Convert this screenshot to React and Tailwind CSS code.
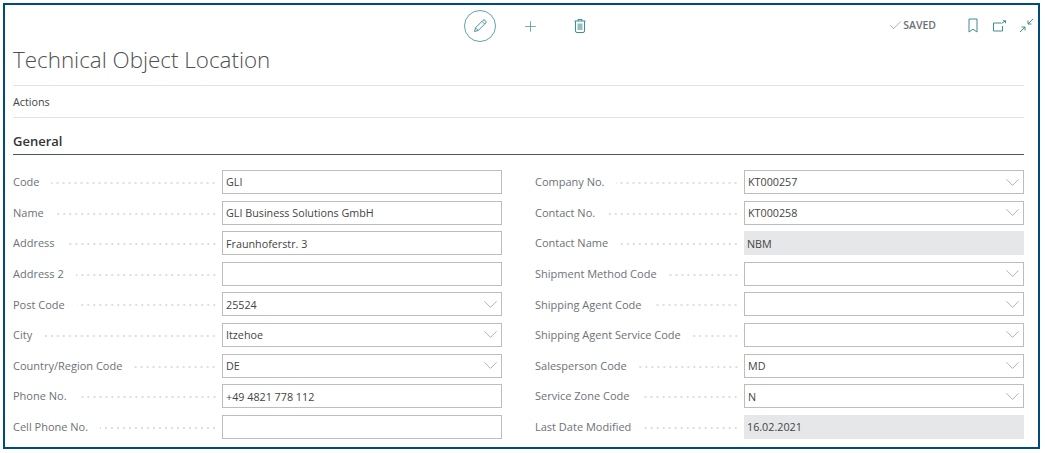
import { Check, ChevronDown, Plus } from 'lucide-react'

const leftFields = [
  { label: 'Code', value: 'GLI' },
  { label: 'Name', value: 'GLI Business Solutions GmbH' },
  { label: 'Address', value: 'Fraunhoferstr. 3' },
  { label: 'Address 2', value: '' },
  { label: 'Post Code', value: '25524', select: true },
  { label: 'City', value: 'Itzehoe', select: true },
  { label: 'Country/Region Code', value: 'DE', select: true },
  { label: 'Phone No.', value: '+49 4821 778 112' },
  { label: 'Cell Phone No.', value: '' },
]

const rightFields = [
  { label: 'Company No.', value: 'KT000257', select: true },
  { label: 'Contact No.', value: 'KT000258', select: true },
  { label: 'Contact Name', value: 'NBM', readOnly: true },
  { label: 'Shipment Method Code', value: '', select: true },
  { label: 'Shipping Agent Code', value: '', select: true },
  { label: 'Shipping Agent Service Code', value: '', select: true },
  { label: 'Salesperson Code', value: 'MD', select: true },
  { label: 'Service Zone Code', value: 'N', select: true },
  { label: 'Last Date Modified', value: '16.02.2021', readOnly: true },
]

function Field({ label, value, select, readOnly }) {
  return (
    <div className="flex h-6 items-center">
      <span className="whitespace-nowrap pr-2 pt-px text-[11px] text-[#6d7278]">{label}</span>
      {/* dotted leader between the caption and the input, dots are widely spaced */}
      <span className="ml-1 h-[2px] min-w-0 flex-1 translate-y-px bg-[radial-gradient(circle,#dedede_0.8px,transparent_1px)] bg-[length:6px_2px] bg-repeat-x [background-position:right_center]" />
      <div
        className={
          'ml-[5px] flex h-6 w-[280px] shrink-0 items-center justify-between pl-[3px] text-[#444] ' +
          (readOnly ? 'bg-[#e6e7e8]' : 'border border-[#bdbdbd] bg-white')
        }
      >
        <span className="pt-px">{value}</span>
        {select && <ChevronDown size={23} strokeWidth={0.6} className="-mr-px text-[#777]" />}
      </div>
    </div>
  )
}

export default function App() {
  return (
    <div className="h-[453px] w-[1045px] bg-white pb-[4px] pl-[3px] pr-[5px] pt-[3px] font-['Open_Sans',sans-serif] text-[10.75px]">
      <div className="relative h-full border-2 border-[#004a80] bg-white pl-2 pr-[14px]">
        {/* Top action bar */}
        <div className="flex h-[39px] items-center pl-[451px] pt-[3px]">
          <div className="flex h-[32px] w-[32px] items-center justify-center rounded-full border border-[#5fa5a8]">
            <svg width="16" height="16" viewBox="0 0 16 16" fill="none" stroke="#4e9499" strokeWidth="1">
              <path d="M2.500 13.500 3.500 9.800 11 2.300a1.400 1.400 0 0 1 2 0l.7.7a1.400 1.400 0 0 1 0 2l-7.500 7.500z" />
              <path d="M10 3.300 12.700 6M3.500 9.800l2.700 2.700" />
            </svg>
          </div>
          <Plus size={17} strokeWidth={1} className="ml-[25.5px] text-[#3f8e93]" />
          <svg className="ml-[34.5px]" width="14" height="16" viewBox="0 0 14 16" fill="none" stroke="#3f8e93" strokeWidth="1">
            <path d="M1.500 3h11M5 3V1.500h4V3M2.500 3v10a1.500 1.500 0 0 0 1.500 1.500h6a1.500 1.500 0 0 0 1.500-1.500V3" />
            <path d="M4.500 5.500h5v6.500h-5z" fill="#8fc0c3" stroke="none" />
          </svg>
        </div>

        {/* Saved state and page icons sit over the bar's right end */}
        <div className="absolute right-[4px] top-[13px] flex items-center text-[#6b7177]">
          <Check size={15} strokeWidth={0.9} />
          <span className="text-[10.5px] font-semibold">SAVED</span>
          <svg className="ml-[31px]" width="12" height="15" viewBox="0 0 12 15" fill="none" stroke="#3f8e93" strokeWidth="1">
            <path d="M2 1h8v13l-4-2.800L2 14z" />
          </svg>
          <svg className="ml-[13px]" width="15" height="12" viewBox="0 0 15 12" fill="none" stroke="#3f8e93" strokeWidth="1">
            <path d="M9 3H1.500v8h9V6M9.500 3.500 13.500.8M11 .8h2.500v2.400" />
          </svg>
          <svg className="ml-[12px]" width="15" height="15" viewBox="0 0 15 15" fill="none" stroke="#3f8e93" strokeWidth="1">
            <path d="M14 1 9 6M9 2.500V6h3.500M1 14l5-5M2.500 9H6v3.500" />
          </svg>
        </div>

        {/* Title */}
        <h1 className="h-[41px] text-[22.4px] font-light leading-[32px] text-[#505050]">Technical Object Location</h1>

        {/* Actions bar */}
        <div className="flex h-[33px] items-center border-y border-[#e3e3e3] pt-[1px] text-[#444]">Actions</div>

        {/* General section */}
        <div className="mt-[14px] border-b border-[#4a5568] pb-[4px] text-[13px] font-semibold leading-[18px] text-[#333]">
          General
        </div>

        <div className="mt-[15px] grid grid-cols-2 gap-x-[33px]">
          <div className="flex flex-col gap-[6.6px]">
            {leftFields.map((f) => (
              <Field key={f.label} {...f} />
            ))}
          </div>
          <div className="flex flex-col gap-[6.6px]">
            {rightFields.map((f) => (
              <Field key={f.label} {...f} />
            ))}
          </div>
        </div>
      </div>
    </div>
  )
}
